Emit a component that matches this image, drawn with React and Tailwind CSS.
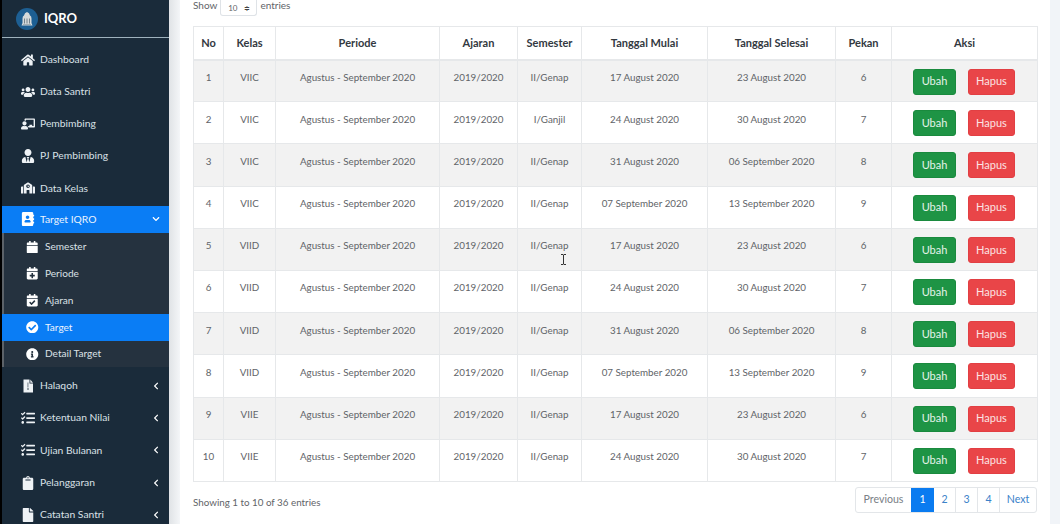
import React from "react";
import { FaHome, FaUsers, FaChalkboardTeacher, FaUserTie, FaSchool, FaAddressBook, FaCalendar, FaCalendarPlus, FaCalendarCheck, FaCheckCircle, FaInfoCircle, FaTasks, FaClipboard, FaFile, FaChevronLeft, FaChevronDown } from "react-icons/fa";

function HalaqohIcon({ size, className }) {
  return (
    <svg width={size} height={size} viewBox="0 0 14 14" className={className}>
      <path d="M2.500 0.500H8.500V4.500H12V13.500H2.500Z" fill="currentColor" />
      <path d="M9.300 0.500L12 3.700H9.300Z" fill="currentColor" />
      <path d="M6.600 3.500H7.300V8.500H6.600ZM6 9.500H8V10.500H6Z" fill="#3d4c59" />
    </svg>
  );
}

const main = [
  [FaHome, "Dashboard"],
  [FaUsers, "Data Santri"],
  [FaChalkboardTeacher, "Pembimbing"],
  [FaUserTie, "PJ Pembimbing"],
  [FaSchool, "Data Kelas"],
];
const sub = [
  [FaCalendar, "Semester"],
  [FaCalendarPlus, "Periode"],
  [FaCalendarCheck, "Ajaran"],
  [FaCheckCircle, "Target", true],
  [FaInfoCircle, "Detail Target"],
];
const lower = [
  [HalaqohIcon, "Halaqoh"],
  [FaTasks, "Ketentuan Nilai"],
  [FaTasks, "Ujian Bulanan"],
  [FaClipboard, "Pelanggaran"],
  [FaFile, "Catatan Santri"],
];
const rows = [
  [1, "VIIC", "II/Genap", "17 August 2020", "23 August 2020", 6],
  [2, "VIIC", "I/Ganjil", "24 August 2020", "30 August 2020", 7],
  [3, "VIIC", "II/Genap", "31 August 2020", "06 September 2020", 8],
  [4, "VIIC", "II/Genap", "07 September 2020", "13 September 2020", 9],
  [5, "VIID", "II/Genap", "17 August 2020", "23 August 2020", 6],
  [6, "VIID", "II/Genap", "24 August 2020", "30 August 2020", 7],
  [7, "VIID", "II/Genap", "31 August 2020", "06 September 2020", 8],
  [8, "VIID", "II/Genap", "07 September 2020", "13 September 2020", 9],
  [9, "VIIE", "II/Genap", "17 August 2020", "23 August 2020", 6],
  [10, "VIIE", "II/Genap", "24 August 2020", "30 August 2020", 7],
];
const heads = [["No", "w-[30px]"], ["Kelas", "w-[52px]"], ["Periode", "w-[164px]"], ["Ajaran", "w-[78px]"], ["Semester", "w-[64px]"], ["Tanggal Mulai", "w-[126px]"], ["Tanggal Selesai", "w-[128px]"], ["Pekan", "w-[56px]"], ["Aksi", "w-[146px]"]];

function NavItem({ icon: Icon, label, arrow }) {
  return (
    <div className="h-[32.2px] flex items-center pl-[18px] pr-[9px] text-[#d9e0e6]">
      <span className="w-[15px] flex justify-center"><Icon size={14} className="text-[#eef2f5]" /></span>
      <span className="ml-[5px] flex-1 text-[10.300px]">{label}</span>
      {arrow && <FaChevronLeft size={8} className="text-white" />}
    </div>
  );
}

export default function App() {
  return (
    <div className="relative w-[1060px] h-[524px] overflow-hidden flex bg-[#f1f4f7] text-[#5f6468]" style={{ fontFamily: 'Lato, "Noto Sans", sans-serif' }}>
      <aside className="w-[169px] shrink-0 h-full bg-[#1a2b3a] border-l-2 border-black overflow-hidden">
        <div className="h-[38px] flex items-center pl-[14px] border-b border-[#9fb2bd]">
          <svg width="22" height="22" viewBox="0 0 22 22">
            <circle cx="11" cy="11" r="11" fill="#1d5f93" />
            <path d="M5.500 17.500L6.500 15V10.500Q6.500 8 8 7.500Q8.500 4.500 11 4Q13.500 4.500 14 7.500Q15.500 8 15.500 10.500V15L16.500 17.500Z" fill="#d5dadb" />
            <path d="M8 10.500H9V15.500H8ZM10.500 10.500H11.500V15.500H10.500ZM13 10.500H14V15.500H13ZM7 16H15V16.600H7Z" fill="#75848e" />
          </svg>
          <span className="ml-[6px] text-[13px] font-bold text-white">IQRO</span>
        </div>
        <div className="h-[5.500px]" />
        {main.map(([I, l]) => <NavItem key={l} icon={I} label={l} />)}
        <div className="h-[27px] mt-[1.500px] bg-[#0a7df5] flex items-center pl-[18px] pr-[9px] text-[#eaf3fd]">
          <span className="w-[15px] flex justify-center"><FaAddressBook size={14} className="text-white" /></span>
          <span className="ml-[5px] flex-1 text-[10.300px]">Target IQRO</span>
          <FaChevronDown size={8} className="text-white" />
        </div>
        <div className="bg-[#25323f] border-l-2 border-[#5c6268] pt-[0.500px]">
          {sub.map(([I, l, a]) => (
            <div key={l} className={`h-[26.8px] flex items-center text-[10.100px] ${a ? "bg-[#0a7df5] text-[#eaf3fd] -ml-[2px] pl-[24px]" : "text-[#dbe1e6] pl-[22px]"}`}>
              <span className="w-[13px] flex justify-center"><I size={12.500} className="text-white" /></span>
              <span className="ml-[6px]">{l}</span>
            </div>
          ))}
        </div>
        <div className="h-[2.500px]" />
        {lower.map(([I, l]) => <NavItem key={l} icon={I} label={l} arrow />)}
      </aside>
      <div className="w-[11px] shrink-0 bg-gradient-to-r from-[#e0e3e6] to-[#f4f6f8]" />
      <main className="w-[870px] shrink-0 h-full bg-white pl-[13px] pr-[13px] flex flex-col overflow-visible">
        <div className="h-[16px] flex items-start text-[10px] leading-[10px]">
          <span>Show</span>
          <span className="mx-[3px] w-[37px] h-[16px] border border-t-0 border-[#dfe3e7] rounded-b-[3px] flex items-center justify-center gap-[6px] text-[8px]">10 <span className="text-[7px] text-[#444]">≑</span></span>
          <span>entries</span>
        </div>
        <table className="w-[844px] table-fixed border-collapse mt-[10px] text-[9.800px]">
          <thead>
            <tr className="h-[33px]">
              {heads.map(([h, w]) => <th key={h} className={`${w} border border-[#e6e8ea] border-b-2 text-center font-bold text-[#33393f] p-0 text-[11px]`}>{h}</th>)}
            </tr>
          </thead>
          <tbody>
            {rows.map((r, i) => (
              <tr key={r[0]} className={`h-[42.2px] ${i % 2 === 0 ? "bg-[#f2f2f2]" : "bg-white"}`}>
                {[r[0], r[1], "Agustus - September 2020", "2019/2020", r[2], r[3], r[4], r[5]].map((c, j) => (
                  <td key={j} className="border border-[#e6e8ea] text-center align-top pt-[8.500px] p-0 leading-[16px]">{c}</td>
                ))}
                <td className="border border-[#e6e8ea] p-0 align-top pt-[8px] text-[11px]">
                  <div className="flex justify-center gap-[12px] pr-[1px]">
                    <span className="w-[43px] h-[26px] rounded-[3px] bg-[#1e9445] border border-[#1a8a3e] text-[#e4f3e9] flex items-center justify-center">Ubah</span>
                    <span className="w-[47px] h-[26px] rounded-[3px] bg-[#e94548] border border-[#e23f43] text-[#fbe3e3] flex items-center justify-center">Hapus</span>
                  </div>
                </td>
              </tr>
            ))}
          </tbody>
        </table>
        <div className="flex items-start justify-between mt-[5px] text-[10.600px]">
          <span className="mt-[8px] text-[9.800px]">Showing 1 to 10 of 36 entries</span>
          <div className="flex h-[26px] border border-[#e3e6e9] rounded-[3px] items-stretch mr-0">
            <span className="w-[55px] flex items-center justify-center text-[#7a8086]">Previous</span>
            <span className="w-[23px] flex items-center justify-center bg-[#0a7bf0] text-white">1</span>
            {["2", "3", "4"].map(n => <span key={n} className="w-[22px] flex items-center justify-center border-r border-[#e3e6e9] text-[#3b82c9]">{n}</span>)}
            <span className="w-[36px] flex items-center justify-center text-[#3b82c9]">Next</span>
          </div>
        </div>
      </main>
      <div className="flex-1 bg-[#f1f4f8]" />
      <svg width="7" height="11" viewBox="0 0 7 11" className="absolute left-[560px] top-[254px]">
        <path d="M1 .5H3L3.500 1L4 .5H6M3.500 1V10M1 10.500H3L3.500 10L4 10.500H6" stroke="#333" strokeWidth="1" fill="none" />
      </svg>
    </div>
  );
}
